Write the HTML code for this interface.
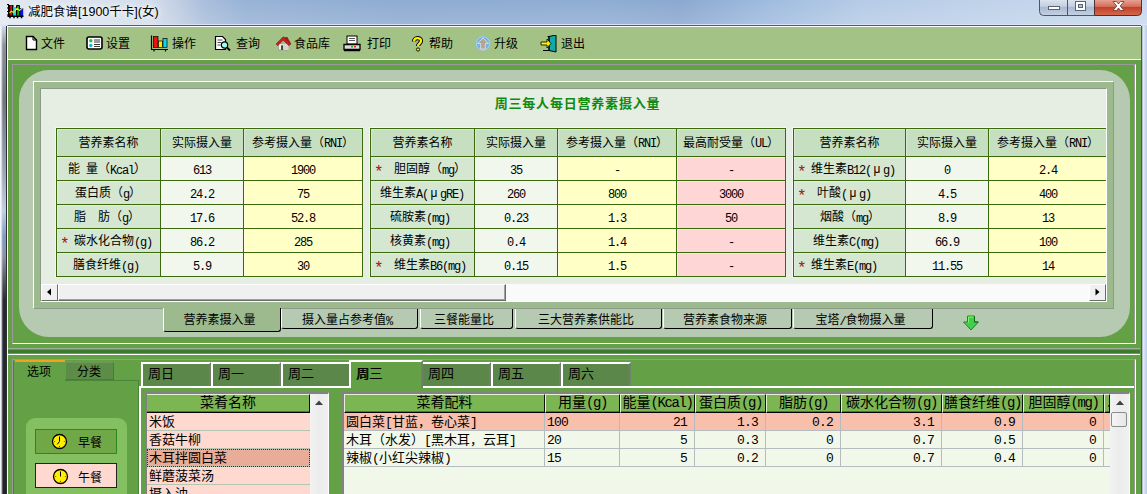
<!DOCTYPE html>
<html lang="zh"><head><meta charset="utf-8"><title>减肥食谱</title>
<style>
*{box-sizing:border-box;margin:0;padding:0}
html,body{width:1147px;height:494px;overflow:hidden}
body{position:relative;background:#b9cde6;font-family:"Liberation Serif","Noto Sans CJK SC",serif;font-size:12px;color:#000;line-height:1}
.a{position:absolute}
#title{left:0;top:0;width:1147px;height:26px;background:linear-gradient(180deg,rgba(255,255,255,0) 0,rgba(255,255,255,.14) 24px,rgba(225,232,248,.9) 24px,rgba(225,232,248,.9) 25px,rgba(255,255,255,0) 25px),linear-gradient(90deg,#e2e8f2 0px,#d4deeb 150px,#c0cee3 178px,#a9bedb 205px,#98b3d6 245px,#8eabd1 400px,#8fadd3 600px,#8ba8cf 680px,#9dbade 760px,#b5cbe6 860px,#c0d3ea 1000px,#c8d9ee 1147px)}
#ttext{left:28px;top:1px;font:12.5px "Liberation Sans","Noto Sans CJK SC",sans-serif;white-space:nowrap;text-shadow:0 0 6px #fff,0 0 6px #fff}
#lframe{left:0;top:26px;width:7px;height:468px;background:linear-gradient(180deg,#cfdaea 0,#8a9099 20px,#70757f 75px,#9aa5b5 145px,#c0cfe2 185px,#7f9cc4 210px,#8a93a5 230px,#55585f 255px,#2a2c33 275px,#22242a 468px)}
#lframe:before{content:'';position:absolute;left:0;top:0;width:3px;height:468px;background:linear-gradient(90deg,#f2f4f8 0,#f2f4f8 1px,rgba(215,220,230,.55) 2px,rgba(215,220,230,0) 3px)}
#lframe:after{content:'';position:absolute;left:6px;top:0;width:1px;height:468px;background:#2c2e34}
#rframe{left:1141px;top:26px;width:6px;height:468px;background:linear-gradient(90deg,#4c5268 0,#4c5268 1px,#9aa4bc 1px,#e4ecf8 2.200px,#cfdcf0 4px,#b8cbe6 6px)}
#client{left:7px;top:25px;width:1134px;height:469px;background:#64a046;border-left:1px solid #fff;border-top:1px solid #555a66}
#toolbar{left:8px;top:26px;width:1133px;height:34px;background:#a3c285;border-top:1px solid #fff;border-bottom:1px solid #fff}
.tbi{top:38px;height:12px;white-space:nowrap}
.ico{top:35px;width:18px;height:18px}
.m{font-family:'Liberation Mono',monospace;font-size:12px;letter-spacing:-1.2px;position:relative;top:1px}
.mh{font-family:'Liberation Mono',monospace;font-size:12px;letter-spacing:-1.2px;position:relative;top:0px}
.m2{font-family:'Liberation Mono',monospace;font-size:14px;letter-spacing:-1.4px}
.m3{font-family:'Liberation Mono',monospace;font-size:13px;letter-spacing:-0.8px}
.mu{display:inline-block;width:12px;text-align:center;font-family:"Liberation Sans","Noto Sans CJK SC",sans-serif}

.ln{position:absolute;}
#ugb{left:12px;top:64px;width:1124px;height:280px;border:1px solid #9a9a9a;border-right-color:#fff;border-bottom-color:#fff}
#ugb2{left:1134px;top:64px;width:1px;height:279px;background:#9a9a9a}
#lp{left:19px;top:70px;width:1111px;height:267px;background:#b5cab0;border-radius:30px}
#band{left:33px;top:81px;width:1081px;height:228px;background:#9dba8f;border:1px solid #fff;border-right-color:#8c9a88;border-bottom-color:#8c9a88}
#inner{left:40px;top:88px;width:1067px;height:214px;background:#e6ede3;border:1px solid #8c9a88;border-right-color:#fff;border-bottom-color:#fff;overflow:hidden}
#h1{left:41px;top:97px;width:1065px;text-align:center;font-weight:bold;font-family:'Liberation Sans','Noto Sans CJK SC',sans-serif;color:#108a10;font-size:13px;letter-spacing:0.8px;height:14px;line-height:14px;padding-left:8px}
.c{position:absolute;border:1px solid #3a6a0c;text-align:center;white-space:pre;overflow:hidden;box-shadow:inset 1px 1px 0 rgba(255,255,255,.3)}
.st{color:#a01414;display:inline-block;width:6px;font:16px 'Liberation Mono',monospace;line-height:0;vertical-align:-4px;text-indent:-2px;letter-spacing:0}

#sb{left:41px;top:284px;width:1065px;height:17px;background:#fafafa}
.sbb{top:284px;width:17px;height:17px;background:#f0f0f0;border:1px solid #fff;border-right-color:#6a6a6a;border-bottom-color:#6a6a6a}
#thumb{left:58px;top:284px;width:448px;height:17px;background:#f0f0f0;border:1px solid #fff;border-right-color:#6a6a6a;border-bottom-color:#6a6a6a;box-shadow:inset -1px -1px 0 #a0a0a0}
.tab{position:absolute;top:309px;height:20px;line-height:22px;text-align:center;padding-right:5px;background:#b5cab0;border-left:1px solid #fff;border-right:1px solid #000;border-bottom:1px solid #000;border-radius:0 0 3px 3px;white-space:nowrap}

.h{position:absolute;height:1px}
.v{position:absolute;width:1px}
.dtab{position:absolute;top:362px;width:70px;height:25px;background:#5b874b;border-left:2px solid #fff;border-top:2px solid #fff;border-right:2px solid #70806c;font-size:13px;line-height:19px;padding-left:5px;white-space:nowrap}
.li{position:absolute;left:147px;width:163px;height:18px;background:#ffd9d0;border-bottom:1px solid #b4c4b0;font-size:13px;line-height:17px;padding-left:2px;white-space:nowrap}
.gh{position:absolute;top:394px;height:19px;background:#7cb652;border-right:1px solid #111;border-bottom:1px solid #000;box-shadow:inset 0 -1px 0 rgba(30,40,20,.45);border-left:1px solid #e4f2d4;border-top:1px solid #e4f2d4;font-size:14px;line-height:15px;text-align:center;white-space:nowrap;overflow:hidden}
.gc{position:absolute;height:18px;border-right:1px solid #b4bcc0;border-bottom:1px solid #b4bcc0;font-size:13px;line-height:17px;white-space:nowrap;overflow:hidden;padding:0 2px}
</style></head>
<body>
<div class="a" id="title"></div>
<svg class="a" style="left:7px;top:3px" width="17" height="16" viewBox="0 0 17 16">
<path d="M1.500 1v12M0 1.500h2M0 5h2M0 8.500h2M0 12h2" stroke="#000" fill="none"/>
<rect x="2" y="2" width="4.500" height="11" fill="#000"/><rect x="3.300" y="2.300" width="1.600" height="10.500" fill="#f01010"/>
<rect x="6.500" y="4" width="2.500" height="9" fill="#10e0e8"/>
<rect x="9" y="2" width="4" height="11" rx="1" fill="#000"/><rect x="10.300" y="3" width="1.500" height="10" fill="#10d010"/>
<rect x="13" y="5" width="3.200" height="8" fill="#1010e8"/><path d="M13 5v8" stroke="#000" stroke-width=".6"/>
<path d="M0.500 13.200h16M3 14v1.300M7 14v1.300M10.500 14v1.300M14.500 14v1.300" stroke="#000" stroke-width="1.500" fill="none"/>
<path d="M2.500 10L4.500 8.200 6.500 9.500 10 5.300 12.500 7.500 15.500 4.800" stroke="#ffe800" stroke-width="1.100" fill="none"/></svg>
<div class="a" id="ttext">减肥食谱[1900千卡](女)</div>
<svg class="a" style="left:1038px;top:0" width="105" height="17" viewBox="0 0 105 17">
<defs><linearGradient id="gb" x1="0" y1="0" x2="0" y2="1"><stop offset="0" stop-color="#dfe6f0"/><stop offset=".45" stop-color="#c3cfe0"/><stop offset=".5" stop-color="#a9b9d1"/><stop offset="1" stop-color="#c5d2e4"/></linearGradient>
<linearGradient id="gr" x1="0" y1="0" x2="0" y2="1"><stop offset="0" stop-color="#e9a99a"/><stop offset=".45" stop-color="#d5705c"/><stop offset=".5" stop-color="#c2402a"/><stop offset="1" stop-color="#d46a4a"/></linearGradient></defs>
<path d="M1.5 -1V11.5a4 4 0 0 0 4 4H56.5V-1z" fill="url(#gb)" stroke="#4d5566"/>
<path d="M56.5 -1V15.5H99.5a4 4 0 0 0 4-4V-1z" fill="url(#gr)" stroke="#4d3030"/>
<path d="M29.5 0V15" stroke="#4d5566"/>
<rect x="10.500" y="6.500" width="11" height="3" fill="#fff" stroke="#596377"/>
<rect x="37.500" y="1.500" width="10" height="9" fill="#fff" stroke="#596377"/><rect x="40.500" y="4.500" width="4" height="3" fill="#b4c1d6" stroke="#596377"/>
<path d="M75 1.500h3.500l2 2.500 2-2.500h3.500l-3.800 4.500 3.800 4.500h-3.500l-2-2.500-2 2.500h-3.500l3.800-4.500z" fill="#fff" stroke="#5e3a3a" stroke-width=".8"/>
</svg>
<div class="a" id="lframe"></div><div class="a" id="rframe"></div>
<div class="a" id="client"></div>
<div class="a" id="toolbar"></div>
<svg class="a ico" style="left:25px" viewBox="0 0 18 18"><path d="M1.500 1.500h6.500l3.500 3.500v9.500h-10z" fill="#fff" stroke="#000" stroke-width="1.400"/><path d="M8 1.500v3.500h3.500" fill="none" stroke="#000"/></svg>
<div class="a tbi" style="left:41px">文件</div>
<svg class="a ico" style="left:86px" viewBox="0 0 18 18"><rect x="1" y="2" width="15" height="12" rx="2" fill="#fff" stroke="#000" stroke-width="1.600"/><circle cx="4.800" cy="5.800" r="1.700" fill="#10c848"/><circle cx="4.800" cy="10.500" r="1.700" fill="#10b8e0"/><path d="M8 5h6M8 7h6M8 9.500h6M8 11.500h6" stroke="#222" stroke-width=".9"/></svg>
<div class="a tbi" style="left:106px">设置</div>
<svg class="a ico" style="left:150px" viewBox="0 0 18 18"><path d="M1.500 0.500v14h16.500M4 14.500v2M15.500 14.500v2" fill="none" stroke="#000" stroke-width="1.200"/><rect x="3.500" y="1.500" width="4.500" height="11" fill="#f01010" stroke="#000" stroke-width=".7"/><rect x="8.500" y="6" width="4" height="6.500" fill="#ffe800" stroke="#000" stroke-width=".7"/><rect x="13" y="3.500" width="4" height="9" fill="#10d8e8" stroke="#000" stroke-width=".7"/></svg>
<div class="a tbi" style="left:172px">操作</div>
<svg class="a ico" style="left:214px" viewBox="0 0 18 18"><path d="M1.500 1.500h7l3 3v10h-10z" fill="#fff" stroke="#000" stroke-width="1.200"/><path d="M3.500 5h5M3.500 7.500h4M3.500 10h3" stroke="#444"/><circle cx="10.500" cy="10" r="3.200" fill="#9fe" stroke="#000" stroke-width="1.200"/><path d="M13 12.500l3 3" stroke="#000" stroke-width="1.800"/></svg>
<div class="a tbi" style="left:236px">查询</div>
<svg class="a ico" style="left:274px" viewBox="0 0 18 18"><g transform="translate(2,1.500) scale(.84)"><path d="M3 8.500h12v7.500h-12z" fill="#f4f0ea" stroke="#8a8680" stroke-width=".7"/><path d="M9 8.500h6v7.500h-6z" fill="#d8d4cc"/><path d="M8.500 0.300l9 8.700-2 2-7-6.500-6.500 6.500-2-2z" fill="#c42222" stroke="#7a1010" stroke-width=".6"/><path d="M9 1l4.500-.5 4.500 8-1 .8z" fill="#a81818"/><rect x="6" y="10.500" width="2.500" height="5.500" fill="#444"/></g></svg>
<div class="a tbi" style="left:294px">食品库</div>
<svg class="a ico" style="left:343px" viewBox="0 0 18 18"><rect x="4" y="1" width="10" height="8" fill="#fff" stroke="#000"/><path d="M6 3.500h6M6 5.500h6" stroke="#555"/><path d="M1 9.500h16v5h-16z" fill="#ddd" stroke="#000" stroke-width="1.300"/><path d="M1 15.500h16" stroke="#000" stroke-width="1.500"/><rect x="11" y="11" width="2" height="1.500" fill="#e22"/><rect x="8" y="11" width="2" height="1.500" fill="#2a2"/></svg>
<div class="a tbi" style="left:367px">打印</div>
<svg class="a ico" style="left:409px" viewBox="0 0 18 18"><path d="M5 6.500c0-4.500 7-4.500 7-.5 0 2.500-3 2.700-3 5" fill="none" stroke="#000" stroke-width="4.200"/><path d="M5 6.500c0-4.500 7-4.500 7-.5 0 2.500-3 2.700-3 5" fill="none" stroke="#fe0" stroke-width="2.300"/><circle cx="9" cy="14.500" r="1.600" fill="#fe0" stroke="#000" stroke-width=".9"/></svg>
<div class="a tbi" style="left:429px">帮助</div>
<svg class="a ico" style="left:474px" viewBox="0 0 18 18"><circle cx="9" cy="8.500" r="7.200" fill="#78b0e4"/><circle cx="9" cy="8.500" r="6.700" fill="none" stroke="#a8d4f6" stroke-width="1"/><path d="M9 3l5.500 5.500h-3.200v5.500h-4.600v-5.500H3.500z" fill="#b4a68c" stroke="#e8eef4" stroke-width=".7"/></svg>
<div class="a tbi" style="left:494px">升级</div>
<svg class="a ico" style="left:540px" viewBox="0 0 18 18"><path d="M9 1.500l7-1.500v17l-7-1.500z" fill="#1aa" stroke="#000" stroke-width="1"/><path d="M7.500 1.500h1.500v14h-6" fill="none" stroke="#000"/><path d="M1 7h6v-3l4 4.500-4 4.500v-3h-6z" fill="#fe0" stroke="#000" stroke-width=".8"/></svg>
<div class="a tbi" style="left:561px">退出</div>
<div class="a" id="ugb"></div><div class="a" id="ugb2"></div>
<div class="a" id="lp"></div>
<div class="a" id="band"></div>
<div class="a" id="inner"></div>
<div class="a" id="h1">周三每人每日营养素摄入量</div>
<div class="a" style="left:55px;top:127px;width:308px;height:151px;border-top:1px solid #f4f8f2;border-left:1px solid #f4f8f2"></div>
<div class="c" style="left:56px;top:128px;width:105px;height:29px;line-height:29px;background:#c6dfc1">营养素名称</div>
<div class="c" style="left:56px;top:156px;width:105px;height:25px;line-height:25px;background:#d5e7d1;text-align:left;padding-left:11px">能<span class="m"> </span>量（<span class="m">Kcal</span>）</div>
<div class="c" style="left:56px;top:180px;width:105px;height:25px;line-height:25px;background:#d5e7d1;text-align:left;padding-left:18px">蛋白质（<span class="m">g</span>）</div>
<div class="c" style="left:56px;top:204px;width:105px;height:25px;line-height:25px;background:#d5e7d1;text-align:left;padding-left:17px">脂<span class="m">  </span>肪（<span class="m">g</span>）</div>
<div class="c" style="left:56px;top:228px;width:105px;height:25px;line-height:25px;background:#d5e7d1;text-align:left;padding-left:5px"><i class="st">*</i><span class="m"> </span>碳水化合物<span class="m">(g)</span></div>
<div class="c" style="left:56px;top:252px;width:105px;height:25px;line-height:25px;background:#d5e7d1;text-align:left;padding-left:16px">膳食纤维<span class="m">(g)</span></div>
<div class="c" style="left:160px;top:128px;width:84px;height:29px;line-height:29px;background:#c6dfc1">实际摄入量</div>
<div class="c" style="left:160px;top:156px;width:84px;height:25px;line-height:25px;background:#f1f7ec"><span class="m">613</span></div>
<div class="c" style="left:160px;top:180px;width:84px;height:25px;line-height:25px;background:#f1f7ec"><span class="m">24.2</span></div>
<div class="c" style="left:160px;top:204px;width:84px;height:25px;line-height:25px;background:#f1f7ec"><span class="m">17.6</span></div>
<div class="c" style="left:160px;top:228px;width:84px;height:25px;line-height:25px;background:#f1f7ec"><span class="m">86.2</span></div>
<div class="c" style="left:160px;top:252px;width:84px;height:25px;line-height:25px;background:#f1f7ec"><span class="m">5.9</span></div>
<div class="c" style="left:243px;top:128px;width:120px;height:29px;line-height:29px;background:#c6dfc1">参考摄入量（<span class="mh">RNI</span>）</div>
<div class="c" style="left:243px;top:156px;width:120px;height:25px;line-height:25px;background:#ffffc6"><span class="m">1900</span></div>
<div class="c" style="left:243px;top:180px;width:120px;height:25px;line-height:25px;background:#ffffc6"><span class="m">75</span></div>
<div class="c" style="left:243px;top:204px;width:120px;height:25px;line-height:25px;background:#ffffc6"><span class="m">52.8</span></div>
<div class="c" style="left:243px;top:228px;width:120px;height:25px;line-height:25px;background:#ffffc6"><span class="m">285</span></div>
<div class="c" style="left:243px;top:252px;width:120px;height:25px;line-height:25px;background:#ffffc6"><span class="m">30</span></div>
<div class="a" style="left:369px;top:127px;width:417px;height:151px;border-top:1px solid #f4f8f2;border-left:1px solid #f4f8f2"></div>
<div class="c" style="left:370px;top:128px;width:105px;height:29px;line-height:29px;background:#c6dfc1">营养素名称</div>
<div class="c" style="left:370px;top:156px;width:105px;height:25px;line-height:25px;background:#d5e7d1;text-align:left;padding-left:5px"><i class="st">*</i><span class="m">  </span>胆固醇（<span class="m">mg</span>）</div>
<div class="c" style="left:370px;top:180px;width:105px;height:25px;line-height:25px;background:#d5e7d1;text-align:left;padding-left:9px">维生素<span class="m">A(</span><span class="mu">μ</span><span class="m">gRE)</span></div>
<div class="c" style="left:370px;top:204px;width:105px;height:25px;line-height:25px;background:#d5e7d1;text-align:left;padding-left:19px">硫胺素<span class="m">(mg)</span></div>
<div class="c" style="left:370px;top:228px;width:105px;height:25px;line-height:25px;background:#d5e7d1;text-align:left;padding-left:19px">核黄素<span class="m">(mg)</span></div>
<div class="c" style="left:370px;top:252px;width:105px;height:25px;line-height:25px;background:#d5e7d1;text-align:left;padding-left:5px"><i class="st">*</i><span class="m">  </span>维生素<span class="m">B6(mg)</span></div>
<div class="c" style="left:474px;top:128px;width:84px;height:29px;line-height:29px;background:#c6dfc1">实际摄入量</div>
<div class="c" style="left:474px;top:156px;width:84px;height:25px;line-height:25px;background:#f1f7ec"><span class="m">35</span></div>
<div class="c" style="left:474px;top:180px;width:84px;height:25px;line-height:25px;background:#f1f7ec"><span class="m">260</span></div>
<div class="c" style="left:474px;top:204px;width:84px;height:25px;line-height:25px;background:#f1f7ec"><span class="m">0.23</span></div>
<div class="c" style="left:474px;top:228px;width:84px;height:25px;line-height:25px;background:#f1f7ec"><span class="m">0.4</span></div>
<div class="c" style="left:474px;top:252px;width:84px;height:25px;line-height:25px;background:#f1f7ec"><span class="m">0.15</span></div>
<div class="c" style="left:557px;top:128px;width:120px;height:29px;line-height:29px;background:#c6dfc1">参考摄入量（<span class="mh">RNI</span>）</div>
<div class="c" style="left:557px;top:156px;width:120px;height:25px;line-height:25px;background:#ffffc6"><span class="m">-</span></div>
<div class="c" style="left:557px;top:180px;width:120px;height:25px;line-height:25px;background:#ffffc6"><span class="m">800</span></div>
<div class="c" style="left:557px;top:204px;width:120px;height:25px;line-height:25px;background:#ffffc6"><span class="m">1.3</span></div>
<div class="c" style="left:557px;top:228px;width:120px;height:25px;line-height:25px;background:#ffffc6"><span class="m">1.4</span></div>
<div class="c" style="left:557px;top:252px;width:120px;height:25px;line-height:25px;background:#ffffc6"><span class="m">1.5</span></div>
<div class="c" style="left:676px;top:128px;width:110px;height:29px;line-height:29px;background:#c6dfc1">最高耐受量（<span class="mh">UL</span>）</div>
<div class="c" style="left:676px;top:156px;width:110px;height:25px;line-height:25px;background:#ffd6d6"><span class="m">-</span></div>
<div class="c" style="left:676px;top:180px;width:110px;height:25px;line-height:25px;background:#ffd6d6"><span class="m">3000</span></div>
<div class="c" style="left:676px;top:204px;width:110px;height:25px;line-height:25px;background:#ffd6d6"><span class="m">50</span></div>
<div class="c" style="left:676px;top:228px;width:110px;height:25px;line-height:25px;background:#ffd6d6"><span class="m">-</span></div>
<div class="c" style="left:676px;top:252px;width:110px;height:25px;line-height:25px;background:#ffd6d6"><span class="m">-</span></div>
<div class="a" style="left:792px;top:127px;width:314px;height:151px;border-top:1px solid #f4f8f2;border-left:1px solid #f4f8f2"></div>
<div class="c" style="left:793px;top:128px;width:113px;height:29px;line-height:29px;background:#c6dfc1">营养素名称</div>
<div class="c" style="left:793px;top:156px;width:113px;height:25px;line-height:25px;background:#d5e7d1;text-align:left;padding-left:5px"><i class="st">*</i><span class="m"> </span>维生素<span class="m">B12(</span><span class="mu">μ</span><span class="m">g)</span></div>
<div class="c" style="left:793px;top:180px;width:113px;height:25px;line-height:25px;background:#d5e7d1;text-align:left;padding-left:5px"><i class="st">*</i><span class="m">  </span>叶酸<span class="m">(</span><span class="mu">μ</span><span class="m">g)</span></div>
<div class="c" style="left:793px;top:204px;width:113px;height:25px;line-height:25px;background:#d5e7d1;text-align:left;padding-left:26px">烟酸（<span class="m">mg</span>）</div>
<div class="c" style="left:793px;top:228px;width:113px;height:25px;line-height:25px;background:#d5e7d1;text-align:left;padding-left:19px">维生素<span class="m">C(mg)</span></div>
<div class="c" style="left:793px;top:252px;width:113px;height:25px;line-height:25px;background:#d5e7d1;text-align:left;padding-left:5px"><i class="st">*</i><span class="m"> </span>维生素<span class="m">E(mg)</span></div>
<div class="c" style="left:905px;top:128px;width:84px;height:29px;line-height:29px;background:#c6dfc1">实际摄入量</div>
<div class="c" style="left:905px;top:156px;width:84px;height:25px;line-height:25px;background:#f1f7ec"><span class="m">0</span></div>
<div class="c" style="left:905px;top:180px;width:84px;height:25px;line-height:25px;background:#f1f7ec"><span class="m">4.5</span></div>
<div class="c" style="left:905px;top:204px;width:84px;height:25px;line-height:25px;background:#f1f7ec"><span class="m">8.9</span></div>
<div class="c" style="left:905px;top:228px;width:84px;height:25px;line-height:25px;background:#f1f7ec"><span class="m">66.9</span></div>
<div class="c" style="left:905px;top:252px;width:84px;height:25px;line-height:25px;background:#f1f7ec"><span class="m">11.55</span></div>
<div class="c" style="left:988px;top:128px;width:118px;height:29px;line-height:29px;background:#c6dfc1;border-right:0;padding-left:8px;text-align:left">参考摄入量（<span class="mh">RNI</span>）</div>
<div class="c" style="left:988px;top:156px;width:118px;height:25px;line-height:25px;background:#ffffc6;border-right:0"><div style="width:118px"><span class="m">2.4</span></div></div>
<div class="c" style="left:988px;top:180px;width:118px;height:25px;line-height:25px;background:#ffffc6;border-right:0"><div style="width:118px"><span class="m">400</span></div></div>
<div class="c" style="left:988px;top:204px;width:118px;height:25px;line-height:25px;background:#ffffc6;border-right:0"><div style="width:118px"><span class="m">13</span></div></div>
<div class="c" style="left:988px;top:228px;width:118px;height:25px;line-height:25px;background:#ffffc6;border-right:0"><div style="width:118px"><span class="m">100</span></div></div>
<div class="c" style="left:988px;top:252px;width:118px;height:25px;line-height:25px;background:#ffffc6;border-right:0"><div style="width:118px"><span class="m">14</span></div></div>
<div class="a" id="sb"></div>
<div class="a sbb" style="left:41px"></div><div class="a sbb" style="left:1089px"></div>
<svg class="a" style="left:41px;top:284px" width="17" height="17"><path d="M10 4.500v7l-4-3.500z" fill="#000"/></svg>
<svg class="a" style="left:1089px;top:284px" width="17" height="17"><path d="M6.500 4.500v7l4-3.500z" fill="#000"/></svg>
<div class="a" id="thumb"></div>
<div class="tab" style="left:163px;width:118px;top:308px;height:24px;line-height:24px;background:#9dba8f">营养素摄入量</div>
<div class="tab" style="left:281px;width:137px">摄入量占参考值<span class="m">%</span></div>
<div class="tab" style="left:420px;width:93px">三餐能量比</div>
<div class="tab" style="left:515px;width:147px">三大营养素供能比</div>
<div class="tab" style="left:663px;width:129px">营养素食物来源</div>
<div class="tab" style="left:793px;width:140px">宝塔<span class="m">/</span>食物摄入量</div>
<svg class="a" style="left:962px;top:315px" width="18" height="17" viewBox="0 0 18 17"><path d="M5.500 1h7v6h4l-7.500 8-7.500-8h4z" fill="#44cc50" stroke="#1c8a24"/><path d="M6.500 7.500v-5.500h5" fill="none" stroke="#7cff5c"/><path d="M12.500 1.500v5.500h3.500" fill="none" stroke="#0c6414"/></svg>
<div class="h" style="left:8px;top:348px;width:1132px;background:#9fae9a"></div>
<div class="h" style="left:8px;top:350px;width:1132px;height:3px;background:#3b7d2d"></div>
<div class="h" style="left:8px;top:354px;width:1132px;background:#fff"></div>
<div class="a" style="left:12px;top:359px;width:1124px;height:140px;border:1px solid #9a9a9a;border-right-color:#fff"></div>
<div class="v" style="left:1134px;top:360px;height:140px;background:#9a9a9a"></div>
<div class="a" style="left:15px;top:360px;width:50px;height:2px;background:#f5a11c"></div>
<div class="v" style="left:13px;top:361px;height:140px;background:#3f8a2e"></div>
<div class="a" style="left:15px;top:366px;width:48px;height:12px;line-height:12px;text-align:center">选项</div>
<div class="a" style="left:65px;top:362px;width:49px;height:18px;background:#5c8c48;border:1px solid #6c9858;border-right-color:#4c7c3c;border-bottom-color:#4c7c3c;line-height:18px;text-align:center;padding-right:1px">分类</div>
<div class="h" style="left:65px;top:380px;width:74px;background:#4a8436"></div>
<div class="v" style="left:138px;top:380px;height:120px;background:#4a8436"></div>
<div class="a" style="left:26px;top:418px;width:101px;height:90px;background:#84c062;border-radius:9px"></div>
<div class="a" style="left:35px;top:429px;width:82px;height:25px;background:#70a848;border:1px solid #2a8a1a"></div>
<div class="a" style="left:35px;top:463px;width:82px;height:25px;background:#ffd9d0;border:1px solid #222"></div>
<svg class="a" style="left:51px;top:433px" width="17" height="17" viewBox="0 0 17 17"><circle cx="8.500" cy="8.500" r="7" fill="#ffee00" stroke="#000" stroke-width="1.300"/><path d="M8.500 8.500V3.500M8.500 8.500L6.300 11.300" stroke="#000" stroke-width="1" fill="none"/><circle cx="8.500" cy="13.300" r=".6" fill="#a00"/><circle cx="3.700" cy="8.500" r=".5" fill="#a00"/><circle cx="13.300" cy="8.500" r=".5" fill="#a00"/></svg>
<svg class="a" style="left:52px;top:468px" width="17" height="17" viewBox="0 0 17 17"><circle cx="8.500" cy="8.500" r="7" fill="#ffee00" stroke="#000" stroke-width="1.300"/><path d="M8.500 8.500V3.500" stroke="#000" stroke-width="1" fill="none"/><circle cx="8.500" cy="13.300" r=".6" fill="#a00"/><circle cx="3.700" cy="8.500" r=".5" fill="#a00"/><circle cx="13.300" cy="8.500" r=".5" fill="#a00"/></svg>
<div class="a" style="left:78px;top:437px;white-space:nowrap">早餐</div>
<div class="a" style="left:78px;top:472px;white-space:nowrap">午餐</div>
<div class="dtab" style="left:141px">周日</div>
<div class="dtab" style="left:211px">周一</div>
<div class="dtab" style="left:281px">周二</div>
<div class="dtab" style="left:421px">周四</div>
<div class="dtab" style="left:491px">周五</div>
<div class="dtab" style="left:561px">周六</div>
<div class="a" style="left:139px;top:386px;width:995px;height:2px;background:#fff"></div>
<div class="a" style="left:139px;top:386px;width:2px;height:110px;background:#fff"></div>
<div class="a" style="left:349px;top:360px;width:74px;height:28px;background:#64a046;border-left:2px solid #fff;border-top:2px solid #fff;border-right:2px solid #70806c;font-size:13px;line-height:23px;padding-left:5px;white-space:nowrap;text-shadow:0.7px 0 0 #000">周三</div>
<div class="a" style="left:145px;top:392px;width:184px;height:110px;border:2px solid #828282;border-right:1px solid #fff;background:#f0f0f0"></div>
<div class="gh" style="left:147px;width:163px;border-left:0">菜肴名称</div>
<div class="li" style="top:413px">米饭</div>
<div class="li" style="top:431px">香菇牛柳</div>
<div class="li" style="top:449px;background:#e9ac98;outline:1px dotted #333;outline-offset:-1px">木耳拌圆白菜</div>
<div class="li" style="top:467px">鲜蘑菠菜汤</div>
<div class="li" style="top:485px">摄入油</div>
<div class="a" style="left:310px;top:394px;width:18px;height:100px;background:linear-gradient(90deg,#f2f2f2,#ececec 50%,#f0f0f0)"></div>
<svg class="a" style="left:314px;top:399px" width="10" height="8"><path d="M5 1.500l4 4.500h-8z" fill="#404040"/></svg>
<div class="a" style="left:342px;top:392px;width:788px;height:110px;border:2px solid #828282;border-right:1px solid #fff;background:#f1f7e9"></div>
<div class="gh" style="left:344px;width:201px">菜肴配料</div>
<div class="gh" style="left:545px;width:75px">用量<span class="m2">(g)</span></div>
<div class="gh" style="left:620px;width:75px">能量<span class="m2">(Kcal)</span></div>
<div class="gh" style="left:695px;width:71px">蛋白质<span class="m2">(g)</span></div>
<div class="gh" style="left:766px;width:75px">脂肪<span class="m2">(g)</span></div>
<div class="gh" style="left:841px;width:101px">碳水化合物<span class="m2">(g)</span></div>
<div class="gh" style="left:942px;width:81px">膳食纤维<span class="m2">(g)</span></div>
<div class="gh" style="left:1023px;width:81px">胆固醇<span class="m2">(mg)</span></div>
<div class="gh" style="left:1104px;width:6px"><span class="m2">.</span></div>
<div class="gc" style="left:344px;top:413px;width:201px;background:#f8bfac;text-align:left">圆白菜<span class="m3">[</span>甘蓝，卷心菜<span class="m3">]</span></div>
<div class="gc" style="left:545px;top:413px;width:75px;background:#f8bfac;text-align:left"><span class="m3">100</span></div>
<div class="gc" style="left:620px;top:413px;width:75px;background:#f8bfac;text-align:right;padding-right:7px"><span class="m3">21</span></div>
<div class="gc" style="left:695px;top:413px;width:71px;background:#f8bfac;text-align:right;padding-right:7px"><span class="m3">1.3</span></div>
<div class="gc" style="left:766px;top:413px;width:75px;background:#f8bfac;text-align:right;padding-right:7px"><span class="m3">0.2</span></div>
<div class="gc" style="left:841px;top:413px;width:101px;background:#f8bfac;text-align:right;padding-right:7px"><span class="m3">3.1</span></div>
<div class="gc" style="left:942px;top:413px;width:81px;background:#f8bfac;text-align:right;padding-right:7px"><span class="m3">0.9</span></div>
<div class="gc" style="left:1023px;top:413px;width:81px;background:#f8bfac;text-align:right;padding-right:7px"><span class="m3">0</span></div>
<div class="gc" style="left:1104px;top:413px;width:6px;background:#f8bfac;text-align:right;padding-right:7px"></div>
<div class="gc" style="left:344px;top:431px;width:201px;background:#f2f8e9;text-align:left">木耳（水发）<span class="m3">[</span>黑木耳，云耳<span class="m3">]</span></div>
<div class="gc" style="left:545px;top:431px;width:75px;background:#f2f8e9;text-align:left"><span class="m3">20</span></div>
<div class="gc" style="left:620px;top:431px;width:75px;background:#f2f8e9;text-align:right;padding-right:7px"><span class="m3">5</span></div>
<div class="gc" style="left:695px;top:431px;width:71px;background:#f2f8e9;text-align:right;padding-right:7px"><span class="m3">0.3</span></div>
<div class="gc" style="left:766px;top:431px;width:75px;background:#f2f8e9;text-align:right;padding-right:7px"><span class="m3">0</span></div>
<div class="gc" style="left:841px;top:431px;width:101px;background:#f2f8e9;text-align:right;padding-right:7px"><span class="m3">0.7</span></div>
<div class="gc" style="left:942px;top:431px;width:81px;background:#f2f8e9;text-align:right;padding-right:7px"><span class="m3">0.5</span></div>
<div class="gc" style="left:1023px;top:431px;width:81px;background:#f2f8e9;text-align:right;padding-right:7px"><span class="m3">0</span></div>
<div class="gc" style="left:1104px;top:431px;width:6px;background:#f2f8e9;text-align:right;padding-right:7px"></div>
<div class="gc" style="left:344px;top:449px;width:201px;background:#f2f8e9;text-align:left">辣椒<span class="m3">(</span>小红尖辣椒<span class="m3">)</span></div>
<div class="gc" style="left:545px;top:449px;width:75px;background:#f2f8e9;text-align:left"><span class="m3">15</span></div>
<div class="gc" style="left:620px;top:449px;width:75px;background:#f2f8e9;text-align:right;padding-right:7px"><span class="m3">5</span></div>
<div class="gc" style="left:695px;top:449px;width:71px;background:#f2f8e9;text-align:right;padding-right:7px"><span class="m3">0.2</span></div>
<div class="gc" style="left:766px;top:449px;width:75px;background:#f2f8e9;text-align:right;padding-right:7px"><span class="m3">0</span></div>
<div class="gc" style="left:841px;top:449px;width:101px;background:#f2f8e9;text-align:right;padding-right:7px"><span class="m3">0.7</span></div>
<div class="gc" style="left:942px;top:449px;width:81px;background:#f2f8e9;text-align:right;padding-right:7px"><span class="m3">0.4</span></div>
<div class="gc" style="left:1023px;top:449px;width:81px;background:#f2f8e9;text-align:right;padding-right:7px"><span class="m3">0</span></div>
<div class="gc" style="left:1104px;top:449px;width:6px;background:#f2f8e9;text-align:right;padding-right:7px"></div>
<div class="a" style="left:1110px;top:394px;width:19px;height:100px;background:linear-gradient(90deg,#f2f2f2,#ececec 50%,#f0f0f0)"></div>
<svg class="a" style="left:1115px;top:399px" width="10" height="8"><path d="M5 1.500l4 4.500h-8z" fill="#404040"/></svg>
<div class="a" style="left:1111px;top:412px;width:16px;height:15px;background:linear-gradient(90deg,#f6f6f6,#e6e6e6);border:1px solid #8c8c8c;border-radius:2px"></div>
</body></html>
